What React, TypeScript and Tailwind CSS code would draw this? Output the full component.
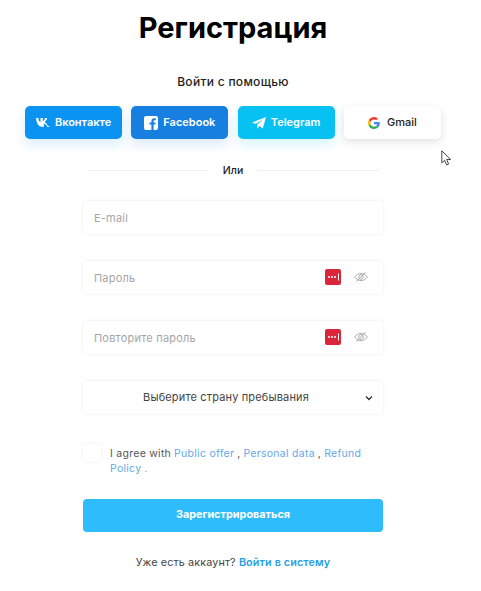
import React from "react";

const shadow = "shadow-[0_0_3px_rgba(0,0,0,0.09)]";

function KeyIcon() {
  return (
    <svg width="16" height="16" viewBox="0 0 16 16" className="shrink-0">
      <rect width="16" height="16" rx="2" fill="#d9263a" />
      <circle cx="4" cy="8" r="1" fill="#fff" />
      <circle cx="7" cy="8" r="1" fill="#fff" />
      <circle cx="10" cy="8" r="1" fill="#fff" />
      <rect x="13" y="4.500" width="1" height="7" fill="#fff" />
    </svg>
  );
}

function EyeOff() {
  return (
    <svg width="14" height="12" viewBox="0 0 14 12" fill="none" stroke="#a3a3a3" strokeWidth="0.9" className="shrink-0">
      <path d="M0.7 6C2.4 3.6 4.6 2.4 7 2.4S11.6 3.6 13.3 6C11.6 8.4 9.4 9.6 7 9.6S2.4 8.4 0.7 6Z" />
      <circle cx="7" cy="6" r="2.3" />
      <path d="M2.5 10.500 11.500 1.200" />
    </svg>
  );
}

function Field({ label, secret }: { label: string; secret?: boolean }) {
  return (
    <div className={`flex h-[33px] w-[300px] items-center rounded-[4px] bg-white pl-[11px] pr-[15px] ${shadow}`}>
      <span className="flex-1 pt-px text-[11px] tracking-[0.2px] text-[#a5a5a5]">{label}</span>
      {secret && (
        <div className="-mt-px flex items-center gap-[13px]">
          <KeyIcon />
          <EyeOff />
        </div>
      )}
    </div>
  );
}

function SocialButton({ className, children }: { className: string; children: React.ReactNode }) {
  return (
    <div className={`flex h-[33px] w-[97px] items-center justify-center rounded-[5px] text-[11px] ${className}`}>
      {children}
    </div>
  );
}

export default function App() {
  return (
    <div className="relative h-[591px] w-[481px] overflow-hidden bg-white font-['Inter',sans-serif] text-[#222]">
      <div className="flex w-[466px] flex-col items-center">
        <h1 className="mt-[10px] text-[29px] font-bold leading-[36px] text-black">Регистрация</h1>
        <p className="mt-[27px] text-[12px] font-medium leading-[18px] tracking-[0.3px]">Войти с помощью</p>

        <div className="mt-[15px] flex gap-[9.3px]">
          <SocialButton className="gap-[5px] bg-[#0a93f0] font-semibold text-white shadow-[0_6px_12px_rgba(10,147,240,0.16)]">
            <svg width="14" height="9" viewBox="0 0 14 9" fill="#fff" className="shrink-0">
              <path d="M0 0h2.400c.1 2.400 1.200 4 2.100 4.200V0h2.300v3.100C7.700 3 8.600 1.700 9 0h2.200c-.3 1.800-1.600 3.200-2.600 3.900 1 .6 2.500 1.800 3.200 3.900L14 9h-2.600c-.6-1.700-2-3-3.600-3.200V9h-.4C3 9 .3 5.800 0 0Z" />
            </svg>
            Вконтакте
          </SocialButton>
          <SocialButton className="gap-[5px] bg-[#177fe0] font-semibold text-white shadow-[0_6px_12px_rgba(23,127,224,0.16)]">
            <svg width="14" height="14" viewBox="0 0 14 14" className="shrink-0">
              <path fill="#fff" d="M2 0h10a2 2 0 0 1 2 2v10a2 2 0 0 1-2 2H9.600V8.600h1.800l.3-2.100H9.600V5.200c0-.6.3-1 1-1h1.200V2.300c-.5-.1-1-.1-1.600-.1-1.700 0-2.800 1-2.800 2.900v1.400H5.500v2.100h1.900V14H2a2 2 0 0 1-2-2V2a2 2 0 0 1 2-2Z" />
            </svg>
            Facebook
          </SocialButton>
          <SocialButton className="gap-[5px] bg-[#07c1f3] font-semibold text-white shadow-[0_6px_12px_rgba(7,193,243,0.16)]">
            <svg width="14" height="12" viewBox="0 0 14 12" fill="#fff" className="shrink-0">
              <path d="M14 0 0 5.500l3.600 1.400L11 2.300 5.200 7.800v3.900l2.300-2.600 3.300 2.400Z" />
            </svg>
            Telegram
          </SocialButton>
          <SocialButton className="gap-[7px] bg-white font-medium text-[#222] shadow-[0_3px_9px_rgba(0,0,0,0.12)]">
            <svg width="12" height="12" viewBox="0 0 48 48" className="shrink-0">
              <path fill="#EA4335" d="M24 9.500c3.500 0 6.700 1.200 9.200 3.600l6.900-6.900C35.900 2.400 30.400 0 24 0 14.600 0 6.500 5.400 2.600 13.200l8 6.200C12.400 13.700 17.700 9.500 24 9.500z" />
              <path fill="#4285F4" d="M47 24.500c0-1.600-.1-3.100-.4-4.500H24v9h12.900c-.6 3-2.200 5.500-4.700 7.200l7.700 6C44.400 38 47 31.800 47 24.500z" />
              <path fill="#FBBC05" d="M10.600 28.600a14.400 14.400 0 0 1 0-9.200l-8-6.200a24 24 0 0 0 0 21.600l8-6.200z" />
              <path fill="#34A853" d="M24 48c6.500 0 11.900-2.100 15.900-5.800l-7.700-6c-2.200 1.500-4.900 2.300-8.200 2.300-6.300 0-11.600-4.200-13.400-9.900l-8 6.200C6.500 42.600 14.600 48 24 48z" />
            </svg>
            Gmail
          </SocialButton>
        </div>

        <div className="mt-[25px] flex w-[290px] items-center gap-[14px]">
          <div className="-mt-px h-px flex-1 bg-[#eeeeee]" />
          <span className="text-[10.500px] font-medium leading-[14px]">Или</span>
          <div className="-mt-px h-px flex-1 bg-[#eeeeee]" />
        </div>

        <div className="mt-[23px] flex flex-col gap-[27px]">
          <Field label="E-mail" />
          <Field label="Пароль" secret />
          <Field label="Повторите пароль" secret />
          <div className={`relative flex h-[33px] w-[300px] items-center justify-center rounded-[4px] bg-white pr-[14px] ${shadow}`}>
            <span className="text-[11px] text-[#444] tracking-[0.15px]">Выберите страну пребывания</span>
            <svg width="8" height="6" viewBox="0 0 8 6" fill="none" stroke="#333" strokeWidth="1.400" className="absolute right-[10px] top-[14px]">
              <path d="M1 1.500 4 4.500 7 1.500" />
            </svg>
          </div>
        </div>

        <div className="mt-[30px] flex w-[300px] items-start gap-[9px]">
          <div className={`h-[18px] w-[18px] shrink-0 rounded-[3px] bg-white ${shadow}`} />
          <div className="mt-[2px] text-[10.500px] leading-[15px] tracking-[0.27px] text-[#555]">
            <div className="flex gap-[3px]">
              <span>I agree with</span>
              <span className="text-[#64a9e8]">Public offer</span>
              <span>,</span>
              <span className="text-[#64a9e8]">Personal data</span>
              <span>,</span>
              <span className="text-[#64a9e8]">Refund</span>
            </div>
            <div className="flex gap-[3px]">
              <span className="text-[#64a9e8]">Policy</span>
              <span className="text-[#64a9e8]">.</span>
            </div>
          </div>
        </div>

        <div className="mt-[23px] flex h-[33px] w-[300px] items-center justify-center rounded-[4px] bg-[#2fbcfd] text-[10.800px] font-bold text-white">
          Зарегистрироваться
        </div>

        <p className="mt-[23px] text-[10.800px] leading-[16px] tracking-[0.12px] text-[#444]">
          Уже есть аккаунт? <span className="font-semibold text-[#2a9fe6]">Войти в систему</span>
        </p>
      </div>

      <svg width="11" height="16" viewBox="0 0 11 16" className="absolute left-[441px] top-[150px]">
        <path d="M0.800 0.800V12.800L3.600 10.300L5.600 15L7.600 14.100L5.700 9.500H9.600Z" fill="#fff" stroke="#333" strokeWidth="0.900" />
      </svg>
    </div>
  );
}
